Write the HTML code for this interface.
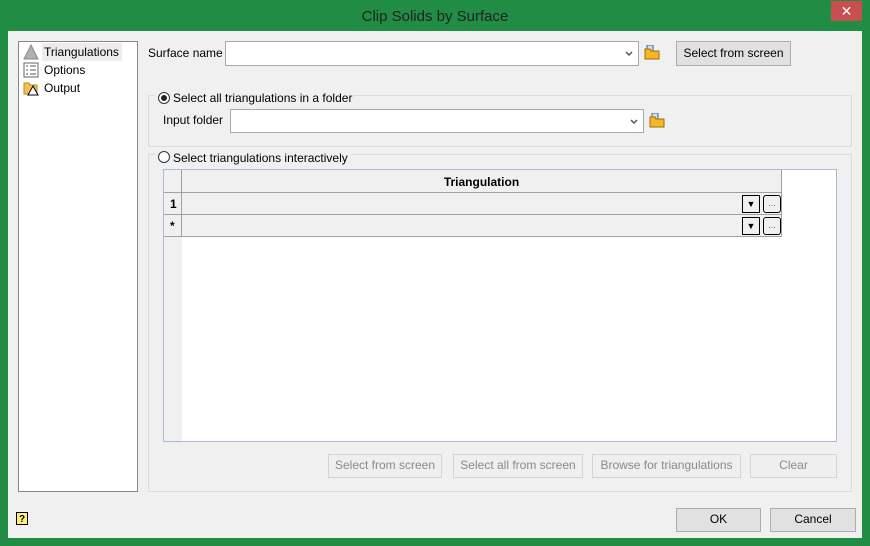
<!DOCTYPE html><html><head><style>
body{margin:0;width:870px;height:546px;background:#218c44;font-family:"Liberation Sans",sans-serif;font-size:12px;color:#000;position:relative;overflow:hidden}
.a{position:absolute}
.main{left:8px;top:31px;width:854px;height:507px;background:#f0f0f0}
.btn{position:absolute;border:1px solid #adadad;background:#e1e1e1;text-align:center;box-sizing:border-box;line-height:21px}
.dis{border-color:#d4d4d4;background:#efefef;color:#8a8a8a}
.combo{position:absolute;background:#fff;border:1px solid #a9a9a9;box-sizing:border-box}
.grp{position:absolute;border:1px solid #dcdcdc;box-sizing:border-box}
.rad{position:absolute;width:12px;height:12px;border:1px solid #333;border-radius:50%;background:#fff;box-sizing:border-box}
.cell{position:absolute;background:#f0f0f0;border-bottom:1px solid #a0a0a0;border-right:1px solid #a0a0a0;box-sizing:border-box}
</style></head><body>
<div class="a" style="left:0;top:8px;width:870px;text-align:center;font-size:15px;color:#222">Clip Solids by Surface</div>
<div class="a" style="left:831px;top:1px;width:31px;height:20px;background:#c74f50;color:#fff;text-align:center;font-size:14px;line-height:20px">✕</div>
<div class="a main"></div>
<div class="a" style="left:18px;top:41px;width:120px;height:451px;background:#fff;border:1px solid #828790;box-sizing:border-box"></div>
<div class="a" style="left:42px;top:43px;width:80px;height:18px;background:#ececec"></div>
<svg class="a" style="left:23px;top:44px" width="16" height="16"><polygon points="8,1 15,15 1,15" fill="#b0b0b0" stroke="#888"/></svg>
<svg class="a" style="left:23px;top:62px" width="16" height="16"><rect x="1" y="1" width="14" height="14" fill="#fff" stroke="#666"/><path d="M3 4h2M3 8h2M3 12h2M7 4h6M7 8h6M7 12h6" stroke="#555"/></svg>
<svg class="a" style="left:23px;top:80px" width="16" height="16"><path d="M1 3h5l1 2h7v9H1z" fill="#f2c14e" stroke="#b88a20"/><polygon points="10,6 15,15 5,15" fill="#fff" stroke="#000"/></svg>
<div class="a" style="left:44px;top:45px">Triangulations</div>
<div class="a" style="left:44px;top:63px">Options</div>
<div class="a" style="left:44px;top:81px">Output</div>
<div class="a" style="left:148px;top:46px">Surface name</div>
<div class="combo" style="left:225px;top:41px;width:414px;height:25px"><svg class="a" style="right:5px;top:9px" width="8" height="6"><path d="M1 1l3 3 3-3" stroke="#555" stroke-width="1.5" fill="none"/></svg></div>
<svg class="a" style="left:644px;top:45px" width="17" height="15"><rect x="3" y="0" width="6" height="7" fill="#cde" stroke="#468"/><path d="M1 4h5l1 2h8v8H1z" fill="#f5b820" stroke="#9a6a10"/></svg>
<div class="btn" style="left:676px;top:41px;width:115px;height:25px;line-height:23px">Select from screen</div>
<div class="grp" style="left:148px;top:95px;width:704px;height:52px"></div>
<div class="a" style="left:155px;top:90px;width:198px;height:14px;background:#f0f0f0"></div>
<div class="rad" style="left:158px;top:92px"><div class="a" style="left:2px;top:2px;width:6px;height:6px;border-radius:50%;background:#222"></div></div>
<div class="a" style="left:173px;top:91px">Select all triangulations in a folder</div>
<div class="a" style="left:163px;top:113px">Input folder</div>
<div class="combo" style="left:230px;top:109px;width:414px;height:24px"><svg class="a" style="right:5px;top:9px" width="8" height="6"><path d="M1 1l3 3 3-3" stroke="#555" stroke-width="1.5" fill="none"/></svg></div>
<svg class="a" style="left:649px;top:113px" width="17" height="15"><rect x="3" y="0" width="6" height="7" fill="#cde" stroke="#468"/><path d="M1 4h5l1 2h8v8H1z" fill="#f5b820" stroke="#9a6a10"/></svg>
<div class="grp" style="left:148px;top:154px;width:704px;height:338px"></div>
<div class="a" style="left:155px;top:150px;width:196px;height:14px;background:#f0f0f0"></div>
<div class="rad" style="left:158px;top:151px"></div>
<div class="a" style="left:173px;top:151px">Select triangulations interactively</div>
<div class="a" style="left:163px;top:169px;width:674px;height:273px;background:#fff;border:1px solid #a9bcd4;box-sizing:border-box"></div>
<div class="a" style="left:164px;top:170px;width:18px;height:271px;background:#f0f0f0"></div>
<div class="cell" style="left:164px;top:170px;width:18px;height:23px"></div>
<div class="cell" style="left:182px;top:170px;width:600px;height:23px;text-align:center;font-weight:bold;line-height:24px">Triangulation</div>
<div class="cell" style="left:164px;top:193px;width:18px;height:22px;font-weight:bold;padding-left:6px;line-height:23px">1</div>
<div class="cell" style="left:182px;top:193px;width:600px;height:22px"></div>
<div class="cell" style="left:164px;top:215px;width:18px;height:22px;font-weight:bold;padding-left:6px;line-height:23px">*</div>
<div class="cell" style="left:182px;top:215px;width:600px;height:22px"></div>
<div class="a" style="left:742px;top:195px;width:18px;height:18px;border:1px solid #000;box-sizing:border-box;font-size:9px;text-align:center;line-height:16px">▼</div>
<div class="a" style="left:763px;top:195px;width:18px;height:18px;border:1px solid #000;border-radius:3px;box-sizing:border-box;font-size:9px;text-align:center;line-height:14px;color:#666">...</div>
<div class="a" style="left:742px;top:217px;width:18px;height:18px;border:1px solid #000;box-sizing:border-box;font-size:9px;text-align:center;line-height:16px">▼</div>
<div class="a" style="left:763px;top:217px;width:18px;height:18px;border:1px solid #000;border-radius:3px;box-sizing:border-box;font-size:9px;text-align:center;line-height:14px;color:#666">...</div>
<div class="btn dis" style="left:328px;top:454px;width:114px;height:24px">Select from screen</div>
<div class="btn dis" style="left:453px;top:454px;width:130px;height:24px">Select all from screen</div>
<div class="btn dis" style="left:592px;top:454px;width:149px;height:24px">Browse for triangulations</div>
<div class="btn dis" style="left:750px;top:454px;width:87px;height:24px">Clear</div>
<div class="a" style="left:16px;top:512px;width:12px;height:13px;border:1px solid #000;background:#ffef7a;font-size:10px;font-weight:bold;text-align:center;line-height:13px;box-sizing:border-box">?</div>
<div class="btn" style="left:676px;top:508px;width:85px;height:24px">OK</div>
<div class="btn" style="left:770px;top:508px;width:86px;height:24px">Cancel</div>
</body></html>
